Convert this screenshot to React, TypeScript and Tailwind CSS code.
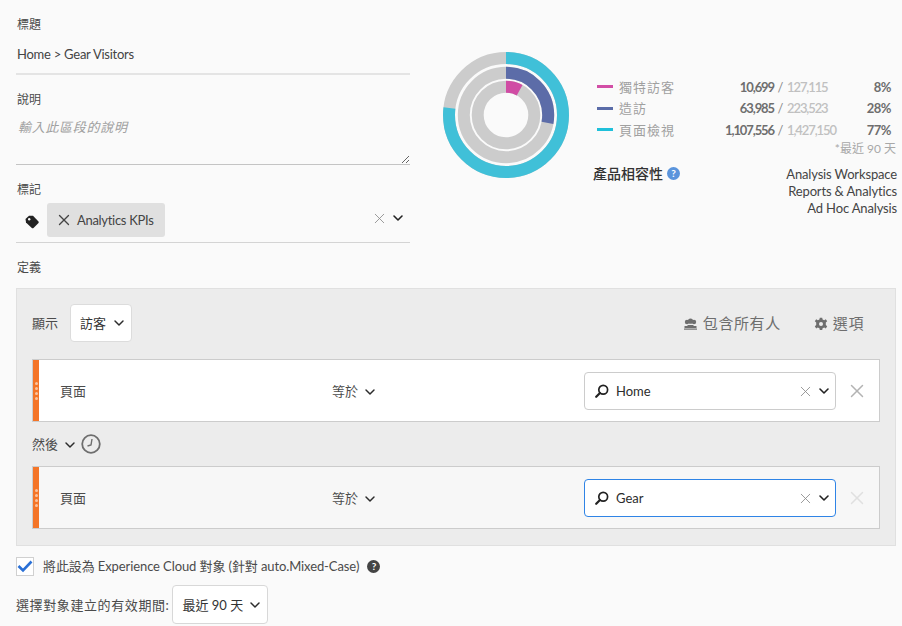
import { ChevronDown, X } from 'lucide-react';

const legend = [
  { name: '獨特訪客', color: 'bg-[#d24ea6]', value: '10,699', total: '127,115', pct: '8%' },
  { name: '造訪', color: 'bg-[#5a6ca8]', value: '63,985', total: '223,523', pct: '28%' },
  { name: '頁面檢視', color: 'bg-[#1fc0da]', value: '1,107,556', total: '1,427,150', pct: '77%' },
];

function Donut() {
  const rings = [
    { r: 57, pct: 77, color: '#40c0d8' },
    { r: 42.2, pct: 28, color: '#5c6ca8' },
    { r: 28.3, pct: 8, color: '#d04ca4' },
  ];
  return (
    <svg width="128" height="128" viewBox="0 0 128 128" className="shrink-0">
      {rings.map((ring) => (
        <g key={ring.r}>
          <circle cx="64" cy="64" r={ring.r} fill="none" stroke="#cccccc" strokeWidth="12" />
          <circle
            cx="64"
            cy="64"
            r={ring.r}
            fill="none"
            stroke={ring.color}
            strokeWidth="12"
            pathLength={100}
            strokeDasharray={`${ring.pct} ${100 - ring.pct}`}
            transform="rotate(-90 64 64)"
          />
        </g>
      ))}
    </svg>
  );
}

function SearchIcon() {
  return (
    <svg width="14" height="14" viewBox="0 0 14 14" className="shrink-0">
      <circle cx="8.2" cy="5.8" r="4.4" fill="none" stroke="#222" strokeWidth="1.7" />
      <path d="M5 9 L1.2 12.8" stroke="#222" strokeWidth="2.2" strokeLinecap="round" />
    </svg>
  );
}

function Grip() {
  return (
    <div className="w-[6px] shrink-0 bg-[#f47528] flex flex-col items-center justify-center gap-[2px]">
      <div className="w-[3px] h-[3px] rounded-full bg-[#fbc49e]" />
      <div className="w-[3px] h-[3px] rounded-full bg-[#fbc49e]" />
      <div className="w-[3px] h-[3px] rounded-full bg-[#fbc49e]" />
      <div className="w-[3px] h-[3px] rounded-full bg-[#fbc49e]" />
    </div>
  );
}

function RuleRow({ value, focused }: { value: string; focused?: boolean }) {
  return (
    <div
      className={`flex h-[63px] border border-[#cccccc] ${focused ? 'bg-[#f7f7f7]' : 'bg-white'}`}
    >
      <Grip />
      <div className="flex-1 flex items-center">
        <span className="w-[293px] pl-[21px] text-[#4b4b4b]">頁面</span>
        <span className="w-[252px] flex items-center gap-[4px] text-[#4b4b4b]">
          等於
          <ChevronDown size={16} strokeWidth={2.2} className="text-[#2c2c2c] mt-[2px]" />
        </span>
        <div
          className={`w-[252px] h-[38px] mt-px rounded-[4px] bg-white border flex items-center pl-[10px] pr-[3px] ${
            focused ? 'border-[#2f84e6]' : 'border-[#cccccc]'
          }`}
        >
          <SearchIcon />
          <span className="ml-[7px] flex-1 text-[#2c2c2c]">{value}</span>
          <X size={17} strokeWidth={1.2} className="text-[#8a8a8a]" />
          <ChevronDown size={16} strokeWidth={2.4} className="ml-[2px] text-[#222]" />
        </div>
        <X
          size={22}
          strokeWidth={1.6}
          className={`ml-[10px] ${focused ? 'text-[#e0e0e0]' : 'text-[#b3b3b3]'}`}
        />
      </div>
    </div>
  );
}

export default function App() {
  return (
    <div className="w-[902px] h-[626px] overflow-hidden bg-[#fafafa] pl-4 pr-[6px] text-[13px] leading-[18px] text-[#4b4b4b] font-[Lato,'Noto_Sans_CJK_TC',sans-serif]">
      {/* Top: form fields + summary */}
      <div className="flex">
        <div className="w-[394px] shrink-0 pt-[15px]">
          <div className="h-[18px] pl-px text-[12px] leading-[20px]">標題</div>
          <div className="h-[42px] border-b-2 border-[#e4e4e4] pt-px pl-px tracking-[-0.25px] flex items-center text-[#444]">
            Home &gt; Gear Visitors
          </div>

          <div className="h-[18px] pl-px mt-[15px] text-[12px] leading-[20px]">說明</div>
          <textarea
            readOnly
            placeholder="輸入此區段的說明"
            className="block w-full h-[57px] pt-[10px] pl-[2px] tracking-[0.7px] bg-transparent border-b border-[#c4c4c4] resize-y italic outline-none placeholder:text-[#a0a0a0]"
          />

          <div className="h-[18px] pl-px mt-[15px] text-[12px] leading-[20px]">標記</div>
          <div className="h-[45px] border-b border-[#d4d4d4] pt-[5px] pb-[5px] flex items-start">
            <svg width="14" height="14" viewBox="0 0 14 14" className="ml-[9px] mt-[12px] shrink-0">
              <path d="M0.5 4 L4 0.8 H8 L13.5 6.5 Q14 7.2 13.5 8 L8.5 13 Q7.6 13.6 6.8 13 L1 7.5 Z" fill="#222" />
              <circle cx="4.2" cy="4.2" r="1.2" fill="#fafafa" />
            </svg>
            <div className="ml-[8px] h-[34px] w-[118px] rounded-[3px] bg-[#e0e0e0] flex items-center pl-[8px] text-[#444]">
              <X size={18} strokeWidth={1.8} className="text-[#444]" />
              <span className="ml-[4px] tracking-[-0.3px]">Analytics KPIs</span>
            </div>
            <div className="flex-1" />
            <div className="flex items-center h-[30px] pr-[4px]">
              <X size={17} strokeWidth={1.2} className="text-[#8a8a8a]" />
              <ChevronDown size={16} strokeWidth={2.4} className="ml-[2px] text-[#222]" />
            </div>
          </div>
        </div>

        <div className="ml-[32px] mt-[51px] shrink-0">
          <Donut />
        </div>

        <div className="ml-[23px] mt-[76px] w-[304px] shrink-0">
          {legend.map((row) => (
            <div key={row.name} className="flex items-center h-[21.5px]">
              <div className={`ml-[4px] w-[16px] h-[3px] ${row.color}`} />
              <span className="ml-[6px] flex-1 tracking-[1px] text-[#a0a0a0]">{row.name}</span>
              <span className="font-bold tracking-[-1.1px] text-[#6e6e6e]">{row.value}</span>
              <span className="w-[13px] text-center text-[#8a8a8a]">/</span>
              <span className="w-[70px] font-semibold tracking-[-1.1px] text-[#c0c0c0]">{row.total}</span>
              <span className="w-[34px] mr-[6px] text-right font-bold tracking-[-0.5px] text-[#6e6e6e]">{row.pct}</span>
            </div>
          ))}
          <div className="h-[16px] mr-[1px] text-right text-[12px] leading-[16px] text-[#a8a8a8]">*最近 90 天</div>
          <div className="mt-[9px] flex items-start justify-between">
            <div className="flex items-center gap-[4px]">
              <span className="text-[14px] leading-[16px] font-medium text-[#333]">產品相容性</span>
              <span className="w-[13px] h-[13px] rounded-full bg-[#5a94dc] text-white text-[10px] leading-[13px] font-bold text-center">
                ?
              </span>
            </div>
            <div className="text-right leading-[17px] tracking-[-0.15px] text-[#444]">
              <div>Analysis Workspace</div>
              <div>Reports &amp; Analytics</div>
              <div>Ad Hoc Analysis</div>
            </div>
          </div>
        </div>
      </div>

      <div className="h-[18px] pl-px mt-[15px] text-[12px] leading-[20px]">定義</div>

      {/* Definition container */}
      <div className="mt-[12px] h-[258px] bg-[#ececec] border border-[#e0e0e0] px-[15px]">
        <div className="h-[70px] pt-[15px] flex items-start">
          <div className="h-[38px] flex items-center">顯示</div>
          <div className="ml-[12px] w-[62px] h-[38px] rounded-[4px] bg-white border border-[#dcdcdc] flex items-center pl-[9px] text-[#333]">
            訪客
            <ChevronDown size={16} strokeWidth={2.2} className="ml-[5px] text-[#2c2c2c]" />
          </div>
          <div className="flex-1" />
          <div className="h-[38px] flex items-center text-[15px] tracking-[0.6px] text-[#6e6e6e]">
            <svg width="13" height="12" viewBox="0 0 13 12" className="mr-[6px] mt-[2px]">
              <circle cx="3" cy="4" r="2.2" fill="#6e6e6e" />
              <circle cx="10" cy="4" r="2.2" fill="#6e6e6e" />
              <circle cx="6.5" cy="3.2" r="2.6" fill="#6e6e6e" />
              <path d="M0.5 10 V8 H12.5 V10 Z M3.5 9 V7 H9.5 V9 Z" fill="#6e6e6e" />
              <rect x="0" y="10.5" width="13" height="1.2" fill="#6e6e6e" />
            </svg>
            包含所有人
            <svg width="14" height="14" viewBox="0 0 14 14" className="ml-[33px] mr-[5px] mt-[2px]">
              <path
                d="M5.8 0.8 H8.2 L8.6 2.6 L10.2 3.3 L11.8 2.3 L13.2 4.3 L11.8 5.5 V8 L13.2 9.2 L11.8 11.4 L10.2 10.5 L8.6 11.2 L8.2 13 H5.8 L5.4 11.2 L3.8 10.5 L2.2 11.4 L0.8 9.2 L2.2 8 V5.5 L0.8 4.3 L2.2 2.3 L3.8 3.3 L5.4 2.6 Z"
                fill="#6e6e6e"
              />
              <circle cx="7" cy="7" r="2" fill="#ececec" />
            </svg>
            選項
            <div className="w-[16px]" />
          </div>
        </div>

        <RuleRow value="Home" />

        <div className="h-[44px] flex items-center text-[#4b4b4b]">
          然後
          <ChevronDown size={16} strokeWidth={2.2} className="ml-[4px] mt-[2px] text-[#2c2c2c]" />
          <svg width="20" height="20" viewBox="0 0 20 20" className="ml-[3px]">
            <circle cx="10" cy="10" r="8.8" fill="none" stroke="#6e6e6e" strokeWidth="1.8" />
            <path d="M11 5 L10 11 L6.5 12" fill="none" stroke="#6e6e6e" strokeWidth="1.4" />
          </svg>
        </div>

        <RuleRow value="Gear" focused />
      </div>

      {/* Audience options */}
      <div className="mt-[10px] h-[20px] flex items-center">
        <div className="w-[18px] h-[19px] border border-[#d0d0d0] bg-white flex items-center justify-center">
          <svg width="16" height="14" viewBox="0 0 16 14">
            <path d="M1.5 7 L6 11.5 L14.5 2.5" fill="none" stroke="#2a70d6" strokeWidth="2.6" />
          </svg>
        </div>
        <span className="ml-[9px] tracking-[-0.1px]">將此設為 Experience Cloud 對象 (針對 auto.Mixed-Case)</span>
        <span className="ml-[8px] w-[13px] h-[13px] rounded-full bg-[#444] text-white text-[10px] leading-[13px] font-bold text-center">
          ?
        </span>
      </div>
      <div className="mt-[9px] flex items-center">
        <span className="tracking-[0.6px]">選擇對象建立的有效期間:</span>
        <div className="ml-[3px] w-[96px] h-[39px] rounded-[4px] bg-white border border-[#d8d8d8] flex items-center pl-[9px] text-[#333]">
          最近 90 天
          <ChevronDown size={16} strokeWidth={2.2} className="ml-[4px] text-[#2c2c2c]" />
        </div>
      </div>
    </div>
  );
}
